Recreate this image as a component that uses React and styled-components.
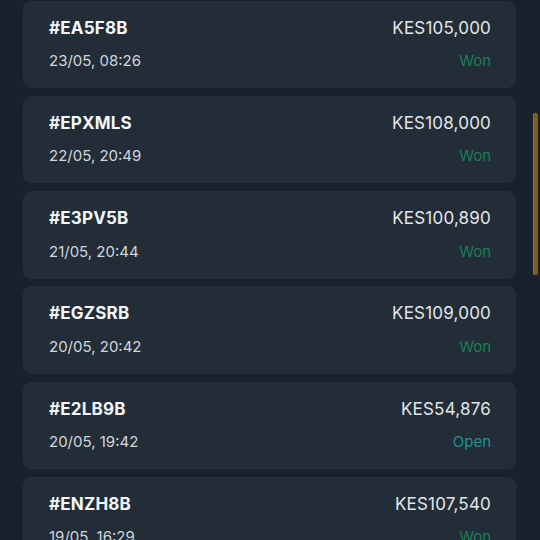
import React from 'react';
import styled, { createGlobalStyle, css } from 'styled-components';

const GlobalStyle = createGlobalStyle`
	html, body {
		margin: 0;
		padding: 0;
		background: #18222c;
		overflow: hidden;
	}
	body {
		font-family: Inter, Roboto, "Noto Sans", sans-serif;
		-webkit-font-smoothing: antialiased;
	}
`

const Screen = styled.div`
	position: relative;
	width: 540px;
	height: 540px;
	overflow: hidden;
	background: #18222c;
`

const BetList = styled.div`
	display: flex;
	flex-direction: column;
	gap: 7.75px;
	padding: 0.5px 24px 0 23px;
`

const BetCard = styled.div`
	box-sizing: border-box;
	height: 87.5px;
	flex-shrink: 0;
	background: #222d38;
	border: 1px solid #25303b;
	border-radius: 9px;
	padding: 15px 24px 0 25px;
	display: grid;
	grid-template-columns: 1fr auto;
	grid-template-rows: 22px 20px;
	row-gap: 12px;
	align-items: center;
`

const BetId = styled.span`
	font-size: 17px;
	font-weight: 700;
	color: #f4f6f8;
	letter-spacing: 0.2px;
`

const Amount = styled.span`
	font-size: 17px;
	font-weight: 400;
	color: #e3e6e9;
	text-align: right;
	letter-spacing: 0.2px;
`

const DateText = styled.span`
	font-size: 15px;
	font-weight: 400;
	color: #d2d6db;
`

const Status = styled.span`
	font-size: 15px;
	font-weight: 400;
	text-align: right;
	${props => props.won && css`
		color: #1a7f54;
	`}
	${props => props.open && css`
		color: #1f9297;
	`}
`

const ScrollThumb = styled.div`
	position: absolute;
	right: 2px;
	top: 113px;
	width: 5px;
	height: 162px;
	border-radius: 3px;
	background: #7f5b22;
	box-shadow: inset 1px 0 0 #9a7231;
`

const bets = [
	{ id: '#EA5F8B', date: '23/05, 08:26', amount: 'KES105,000', status: 'Won' },
	{ id: '#EPXMLS', date: '22/05, 20:49', amount: 'KES108,000', status: 'Won' },
	{ id: '#E3PV5B', date: '21/05, 20:44', amount: 'KES100,890', status: 'Won' },
	{ id: '#EGZSRB', date: '20/05, 20:42', amount: 'KES109,000', status: 'Won' },
	{ id: '#E2LB9B', date: '20/05, 19:42', amount: 'KES54,876', status: 'Open' },
	{ id: '#ENZH8B', date: '19/05, 16:29', amount: 'KES107,540', status: 'Won' },
];

function App() {
	return (
		<>
			<GlobalStyle />
			<Screen>
				<BetList>
					{bets.map(bet => (
						<BetCard key={bet.id}>
							<BetId>{bet.id}</BetId>
							<Amount>{bet.amount}</Amount>
							<DateText>{bet.date}</DateText>
							<Status won={bet.status === 'Won' || undefined} open={bet.status === 'Open' || undefined}>
								{bet.status}
							</Status>
						</BetCard>
					))}
				</BetList>
				<ScrollThumb />
			</Screen>
		</>
	);
}

export default App;
